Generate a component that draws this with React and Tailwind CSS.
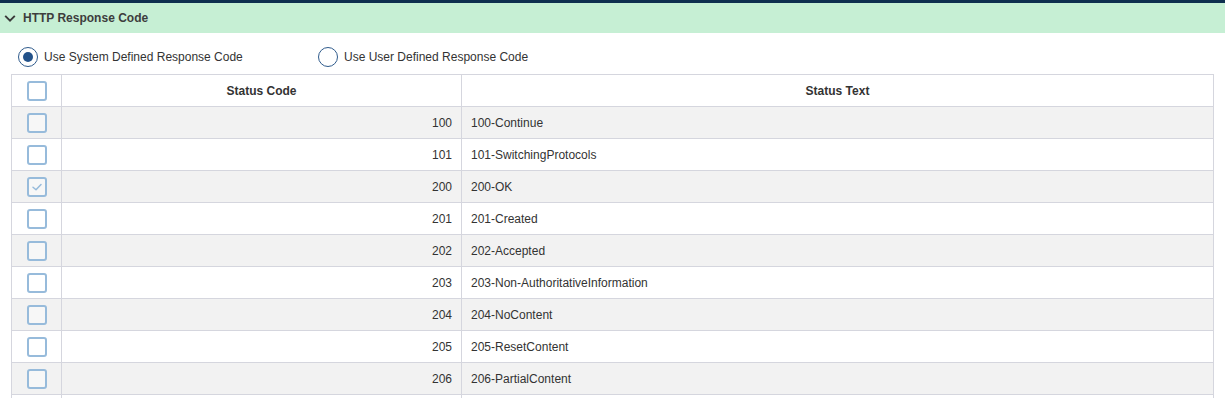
import React, { useState } from 'react';

const rows = [
    { code: 100, text: '100-Continue' },
    { code: 101, text: '101-SwitchingProtocols' },
    { code: 200, text: '200-OK', checked: true },
    { code: 201, text: '201-Created' },
    { code: 202, text: '202-Accepted' },
    { code: 203, text: '203-Non-AuthoritativeInformation' },
    { code: 204, text: '204-NoContent' },
    { code: 205, text: '205-ResetContent' },
    { code: 206, text: '206-PartialContent' },
    { code: null, text: '' },
];

function Checkbox({ checked, shaded }) {
    return (
        <span
            className={`flex h-5 w-5 items-center justify-center rounded-[3px] border-2 border-[#97bbdb] ${shaded ? 'bg-[#f7f7f7]' : 'bg-white'}`}
        >
            {checked && (
                <svg width="14" height="14" viewBox="0 0 14 14" fill="none">
                    <path d="M3 7.2 L6 9.8 L11 4.5" stroke="#97bbdb" strokeWidth="1.5" strokeLinecap="round" strokeLinejoin="round" />
                </svg>
            )}
        </span>
    );
}

function Radio({ selected, label, onClick }) {
    return (
        <button type="button" onClick={onClick} className="flex items-center gap-[6px]">
            <span className="flex h-5 w-5 items-center justify-center rounded-full border-[1.5px] border-[#2f5b8c] bg-white">
                {selected && <span className="h-[10px] w-[10px] rounded-full bg-[#23528a]" />}
            </span>
            <span className="text-[12px] text-[#333]">{label}</span>
        </button>
    );
}

export default function App() {
    const [mode, setMode] = useState('system');

    return (
        <div className="h-[398px] w-[1225px] overflow-hidden bg-white font-['Liberation_Sans',Arial,sans-serif]">
            {/* top bar */}
            <div className="h-[3px] bg-[#0e2f4f]" />

            {/* section header */}
            <div className="flex h-[30px] items-center gap-[7px] bg-[#c6efd4] pl-[4px]">
                <svg width="12" height="9" viewBox="0 0 12 9" fill="none">
                    <path d="M1.2 1.8 L6 6.6 L10.8 1.8" stroke="#3a3a3a" strokeWidth="1.9" />
                </svg>
                <span className="text-[12px] font-bold text-[#3d3d3d]">HTTP Response Code</span>
            </div>

            {/* radio options */}
            <div className="flex h-[41px] items-start pl-[18px] pt-[14px]">
                <div className="w-[300px]">
                    <Radio selected={mode === 'system'} label="Use System Defined Response Code" onClick={() => setMode('system')} />
                </div>
                <Radio selected={mode === 'user'} label="Use User Defined Response Code" onClick={() => setMode('user')} />
            </div>

            {/* table */}
            <div className="ml-[11px] w-[1203px] border-x border-t border-[#d5d6de]">
                <div className="flex h-[32px] border-b border-[#d5d6de] bg-white">
                    <div className="flex w-[50px] items-center justify-center border-r border-[#d5d6de]">
                        <Checkbox />
                    </div>
                    <div className="flex w-[400px] items-center justify-center border-r border-[#d5d6de] text-[12px] font-bold text-[#333]">
                        Status Code
                    </div>
                    <div className="flex flex-1 items-center justify-center text-[12px] font-bold text-[#333]">
                        Status Text
                    </div>
                </div>
                {rows.map((row, i) => {
                    const shaded = i % 2 === 0;
                    return (
                        <div
                            key={i}
                            className={`flex h-[32px] border-b border-[#d5d6de] text-[12px] text-[#333] ${shaded ? 'bg-[#f2f2f2]' : 'bg-white'}`}
                        >
                            <div className="flex w-[50px] items-center justify-center border-r border-[#d5d6de]">
                                {row.code && <Checkbox checked={row.checked} shaded={shaded} />}
                            </div>
                            <div className="flex w-[400px] items-center justify-end border-r border-[#d5d6de] pr-[9px]">
                                {row.code}
                            </div>
                            <div className="flex flex-1 items-center pl-[9px]">{row.text}</div>
                        </div>
                    );
                })}
            </div>
        </div>
    );
}
